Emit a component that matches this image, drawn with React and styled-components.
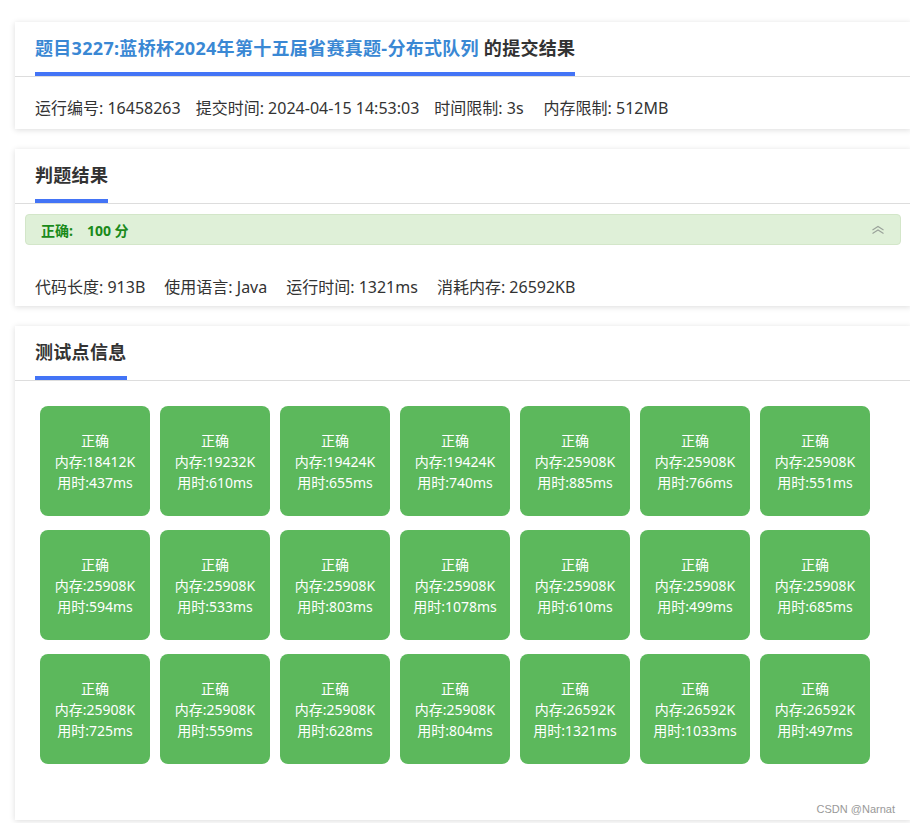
import React from 'react';
import styled, { createGlobalStyle } from 'styled-components';

const GlobalStyle = createGlobalStyle`
  html, body {
    margin: 0;
    padding: 0;
    background: #fff;
    overflow-x: hidden;
  }
  body {
    font-family: "Noto Sans", "Noto Sans CJK SC", sans-serif;
    color: #333;
  }
`;

const Page = styled.div`
  padding-top: 22px;
  width: 910px;
  position: relative;
`;

const Card = styled.section`
  position: relative;
  margin: 0 0 20px 15px;
  width: 896px;
  background: #fff;
  box-shadow: 0 1px 6px rgba(0, 0, 0, 0.14);
`;

const CardHeader = styled.div`
  padding: 0 20px;
  border-bottom: 1px solid #ddd;
`;

const Title = styled.h3`
  display: inline-block;
  margin: 0;
  padding: 13px 0 11px;
  font-size: 18px;
  line-height: 26px;
  font-weight: 700;
  letter-spacing: 0.3px;
  color: #333;
  border-bottom: 4px solid #4374f6;
`;

const ProblemLink = styled.a`
  color: #3a88d4;
  text-decoration: none;
`;

const InfoLine = styled.div`
  display: flex;
  padding: ${p => p.$pad || '20px 20px 10px'};
  font-size: 16px;
  line-height: 22px;
  color: #333;
`;

const InfoItem = styled.span`
  margin-right: ${p => p.$gap || 15}px;
`;

const Alert = styled.div`
  display: flex;
  align-items: center;
  justify-content: space-between;
  margin: 10px 10px 0;
  height: 29px;
  padding: 0 15px;
  background: #dff0d8;
  border: 1px solid #d3e6c9;
  border-radius: 4px;
  font-size: 14px;
  font-weight: 700;
  color: #1a8a1a;
`;

const Score = styled.span`
  margin-left: 14px;
`;

const Grid = styled.div`
  display: grid;
  grid-template-columns: repeat(7, 110px);
  column-gap: 10px;
  row-gap: 14px;
  padding: 25px 25px 56px;
`;

const Point = styled.div`
  width: 110px;
  height: 110px;
  border-radius: 8px;
  background: #5cb85c;
  color: #fff;
  font-size: 14px;
  line-height: 21px;
  display: flex;
  flex-direction: column;
  align-items: center;
  justify-content: center;
`;

const Watermark = styled.span`
  position: absolute;
  right: 16px;
  bottom: 5px;
  font-family: "Liberation Sans", Arial, sans-serif;
  font-size: 11px;
  color: #999;
`;

const points = [
  [18412, 437], [19232, 610], [19424, 655], [19424, 740], [25908, 885], [25908, 766], [25908, 551],
  [25908, 594], [25908, 533], [25908, 803], [25908, 1078], [25908, 610], [25908, 499], [25908, 685],
  [25908, 725], [25908, 559], [25908, 628], [25908, 804], [26592, 1321], [26592, 1033], [26592, 497],
];

function ChevronsUp() {
  return (
    <svg width="14" height="10" viewBox="0 0 14 10" fill="none" stroke="#9aa29a" strokeWidth="1.1">
      <path d="M1.5 5 L7 1.5 L12.5 5" />
      <path d="M1.5 8.5 L7 5 L12.5 8.5" />
    </svg>
  );
}

export default function App() {
  return (
    <Page>
      <GlobalStyle />
      <Card>
        <CardHeader>
          <Title>
            <ProblemLink href="#">题目3227:蓝桥杯2024年第十五届省赛真题-分布式队列</ProblemLink> 的提交结果
          </Title>
        </CardHeader>
        <InfoLine>
          <InfoItem>运行编号: 16458263</InfoItem>
          <InfoItem>提交时间: 2024-04-15 14:53:03</InfoItem>
          <InfoItem $gap={20}>时间限制: 3s</InfoItem>
          <InfoItem>内存限制: 512MB</InfoItem>
        </InfoLine>
      </Card>

      <Card>
        <CardHeader>
          <Title>判题结果</Title>
        </CardHeader>
        <Alert>
          <span>正确:<Score>100 分</Score></span>
          <ChevronsUp />
        </Alert>
        <InfoLine $pad="31px 20px 8px">
          <InfoItem $gap={19}>代码长度: 913B</InfoItem>
          <InfoItem $gap={19}>使用语言: Java</InfoItem>
          <InfoItem $gap={19}>运行时间: 1321ms</InfoItem>
          <InfoItem>消耗内存: 26592KB</InfoItem>
        </InfoLine>
      </Card>

      <Card>
        <CardHeader>
          <Title>测试点信息</Title>
        </CardHeader>
        <Grid>
          {points.map(([mem, time], i) => (
            <Point key={i}>
              <span>正确</span>
              <span>内存:{mem}K</span>
              <span>用时:{time}ms</span>
            </Point>
          ))}
        </Grid>
        <Watermark>CSDN @Narnat</Watermark>
      </Card>
    </Page>
  );
}
